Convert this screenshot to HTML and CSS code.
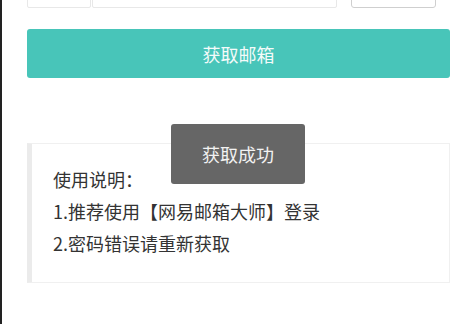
FILE: index.html
```html
<!DOCTYPE html>
<html lang="zh">
<head>
<meta charset="utf-8">
<link rel="stylesheet" href="styles.css">
</head>
<body>
<div class="page">
  <div class="form-row">
    <div class="input-group">
      <div class="input-prefix"></div>
      <div class="input-field"></div>
    </div>
    <div class="code-btn"></div>
  </div>
  <button class="main-btn">获取邮箱</button>
  <div class="notice">
    <p>使用说明：</p>
    <p>1.推荐使用【网易邮箱大师】登录</p>
    <p>2.密码错误请重新获取</p>
  </div>
  <div class="toast">获取成功</div>
</div>
</body>
</html>
```
FILE: styles.css
```css
html, body {
  margin: 0;
  padding: 0;
  background: #fff;
}
body {
  font-family: "Noto Sans CJK SC", "Noto Sans", sans-serif;
  color: #333;
}
.page {
  position: relative;
  height: 324px;
  box-sizing: border-box;
  border-left: 2px solid #222;
  padding: 0 23px 0 25px;
  overflow: hidden;
}
.form-row {
  display: flex;
  gap: 14px;
  margin-top: -32px;
  height: 40px;
}
.input-group {
  display: flex;
  width: 310px;
  gap: 1px;
}
.input-prefix, .input-field {
  box-sizing: border-box;
  border: 1px solid #e8e8e8;
  border-radius: 2px;
  background: #fff;
}
.input-prefix { width: 64px; }
.input-field { flex: 1; }
.code-btn {
  width: 85px;
  box-sizing: border-box;
  border: 1px solid #cfcfcf;
  border-radius: 3px;
  background: #fff;
}
.main-btn {
  display: block;
  width: 100%;
  height: 49px;
  margin-top: 21px;
  border: none;
  border-radius: 3px;
  background: #48c5b9;
  color: #f4fbfa;
  font-family: inherit;
  font-size: 18px;
  padding: 0;
}
.notice {
  margin-top: 65px;
  box-sizing: border-box;
  height: 140px;
  border: 1px solid #f0f0f0;
  border-left: 5px solid #ebebeb;
  padding: 19px 20px 0 21px;
}
.notice p {
  margin: 0;
  font-size: 18px;
  line-height: 32px;
  color: #333;
}
.toast {
  position: absolute;
  left: 169px;
  top: 124px;
  width: 134px;
  height: 60px;
  border-radius: 3px;
  background: #666;
  color: #f2f2f2;
  font-size: 18px;
  display: flex;
  align-items: center;
  justify-content: center;
}
```
